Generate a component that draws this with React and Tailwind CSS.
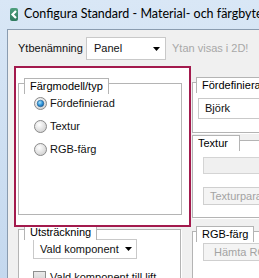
import React from "react";

function Radio({ checked }) {
  return (
    <svg width="13" height="13" viewBox="0 0 13 13" className="shrink-0">
      <defs>
        <radialGradient id={checked ? "rgc" : "rgu"} cx="40%" cy="35%" r="70%">
          <stop offset="0%" stopColor="#ffffff" />
          <stop offset="100%" stopColor="#cfcfcf" />
        </radialGradient>
        <radialGradient id="dot" cx="40%" cy="35%" r="70%">
          <stop offset="0%" stopColor="#a9e3fb" />
          <stop offset="60%" stopColor="#2a8fd6" />
          <stop offset="100%" stopColor="#1a5f9e" />
        </radialGradient>
      </defs>
      <circle cx="6.5" cy="6.5" r="6" fill={`url(#${checked ? "rgc" : "rgu"})`} stroke="#8a8a8a" />
      {checked && <circle cx="6.5" cy="6.5" r="3.3" fill="url(#dot)" stroke="#1f5c8f" strokeWidth="0.6" />}
    </svg>
  );
}

function Arrow() {
  return (
    <svg width="7" height="4" viewBox="0 0 7 4" className="shrink-0">
      <path d="M0 0h7L3.5 4z" fill="#000" />
    </svg>
  );
}

function Group({ title, tabClass, className, children }) {
  return (
    <div className={"relative flex flex-col " + className}>
      <div className="mt-[5px] flex-1 border border-[#b4b4b4] bg-white shadow-[inset_1px_1px_0_#ffffff,1px_1px_0_#ffffff]">
        {children}
      </div>
      <div
        className={
          "absolute top-0 h-[16px] border-t border-l border-r border-[#b4b4b4] bg-white px-[5px] leading-[15px] text-[#000] whitespace-nowrap " +
          tabClass
        }
      >
        {title}
      </div>
    </div>
  );
}

export default function App() {
  return (
    <div className="relative w-[259px] h-[278px] overflow-hidden bg-gradient-to-b from-[#d9e7f6] to-[#c4d8ee] font-['Liberation_Sans',sans-serif] text-[11px] text-[#111]">
      {/* title bar */}
      <div className="flex h-[29px] items-center pl-[10px]">
        <div className="flex h-[13px] w-[13px] items-center justify-center rounded-[2px] bg-gradient-to-b from-[#4fa07e] to-[#2f7a5e]">
          <svg width="8" height="9" viewBox="0 0 8 9">
            <path d="M6 1L2.5 4.5 6 8" stroke="#fff" strokeWidth="2.2" fill="none" />
          </svg>
        </div>
        <div className="ml-[6px] whitespace-nowrap font-['Lato',sans-serif] text-[12.5px] text-black">
          Configura Standard - Material- och färgbyte
        </div>
      </div>

      {/* client */}
      <div className="ml-[7px] h-[249px] border-l border-t border-[#8a9cb0] bg-[#f0f0f0]">
        <div className="flex items-center pl-[10px] pt-[7px]">
          <div className="w-[68px] whitespace-nowrap">Ytbenämning</div>
          <div className="flex h-[23px] w-[80px] items-center justify-between border border-[#c9c9c9] bg-white pl-[7px] pr-[5px]">
            <span>Panel</span>
            <Arrow />
          </div>
          <div className="ml-[6px] whitespace-nowrap text-[#a8a8a8]">Ytan visas i 2D!</div>
        </div>

        <div className="mt-[6px] flex pl-[6px]">
          {/* left column */}
          <div className="flex w-[177px] shrink-0 flex-col">
            <div className="relative z-10 h-[161px] border-2 border-[#a31a4d] bg-white pl-[2px] pt-[10px]">
              <Group title="Färgmodell/typ" tabClass="left-[6px]" className="h-[137px] w-[164px]">
                <div className="flex flex-col gap-[10px] pl-[15px] pt-[13px]">
                  <div className="flex h-[13px] items-center">
                    <Radio checked />
                    <span className="ml-[3px]">Fördefinierad</span>
                  </div>
                  <div className="flex h-[13px] items-center">
                    <Radio />
                    <span className="ml-[3px]">Textur</span>
                  </div>
                  <div className="flex h-[13px] items-center">
                    <Radio />
                    <span className="ml-[3px]">RGB-färg</span>
                  </div>
                </div>
              </Group>
            </div>
            <Group title="Utsträckning" tabClass="left-[6px]" className="ml-[4px] -mt-[3px] h-[60px] w-[163px]">
              <div className="pl-[14px] pt-[9px]">
                <div className="flex h-[20px] w-[104px] items-center justify-between border border-[#c9c9c9] bg-white pl-[6px] pr-[4px]">
                  <span className="whitespace-nowrap">Vald komponent</span>
                  <Arrow />
                </div>
                <div className="mt-[10px] flex items-center">
                  <div className="h-[13px] w-[13px] border border-[#8e8f8f] bg-gradient-to-b from-[#eaeaea] to-[#d0d0d0]" />
                  <span className="ml-[4px] whitespace-nowrap">Vald komponent till lift</span>
                </div>
              </div>
            </Group>
          </div>

          {/* right column */}
          <div className="ml-[1px] mt-[11px] flex flex-1 flex-col">
            <Group title="Fördefinierat" tabClass="left-[4px]" className="h-[56px] w-[80px]">
              <div className="pl-[5px] pt-[15px]">
                <div className="flex h-[21px] w-[90px] items-center border border-[#c9c9c9] bg-white pl-[6px]">
                  Björk
                </div>
              </div>
            </Group>
            <Group title="Textur" tabClass="left-[0px] w-[48px]" className="mt-[2px] h-[83px] w-[80px]">
              <div className="pl-[10px] pt-[16px]">
                <div className="h-[17px] w-[70px] border border-[#d4d4d4] bg-[#f0f0f0]" />
                <div className="mt-[13px] flex h-[18px] w-[80px] items-center whitespace-nowrap border border-[#cfcfcf] bg-[#f4f4f4] pl-[6px] text-[#a3a3a3]">
                  Texturparametrar
                </div>
              </div>
            </Group>
            <Group title="RGB-färg" tabClass="left-[4px]" className="mt-[8px] h-[60px] w-[80px]">
              <div className="pl-[10px] pt-[11px]">
                <div className="flex h-[18px] w-[80px] items-center whitespace-nowrap border border-[#cfcfcf] bg-[#f4f4f4] pl-[10px] text-[#a3a3a3]">
                  Hämta RGB
                </div>
              </div>
            </Group>
          </div>
        </div>
      </div>
    </div>
  );
}
